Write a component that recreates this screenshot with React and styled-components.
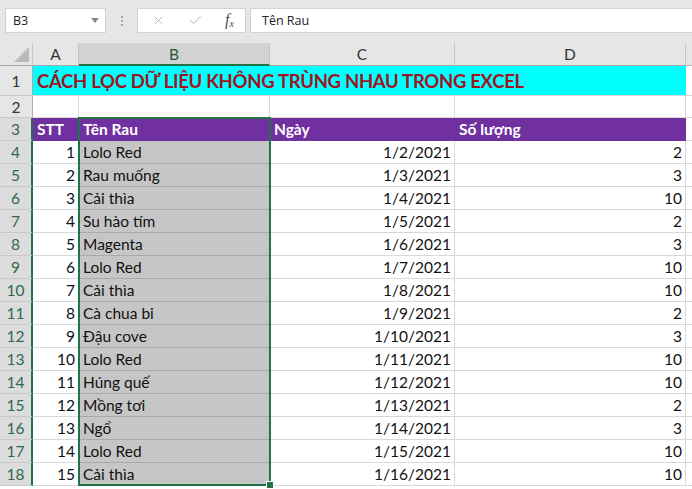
import React from 'react'
import styled, { createGlobalStyle } from 'styled-components'
import { X, Check } from 'lucide-react'

const GlobalStyle = createGlobalStyle`
  body {
    margin: 0;
    background: #ffffff;
    font-family: Lato, 'Liberation Sans', sans-serif;
  }
`

const COLS = '33px 46px 191px 185px 231px 1fr'
const GREEN = '#217346'

const rows = [
  [1, 'Lolo Red', '1/2/2021', 2],
  [2, 'Rau muống', '1/3/2021', 3],
  [3, 'Cải thìa', '1/4/2021', 10],
  [4, 'Su hào tím', '1/5/2021', 2],
  [5, 'Magenta', '1/6/2021', 3],
  [6, 'Lolo Red', '1/7/2021', 10],
  [7, 'Cải thìa', '1/8/2021', 10],
  [8, 'Cà chua bi', '1/9/2021', 2],
  [9, 'Đậu cove', '1/10/2021', 3],
  [10, 'Lolo Red', '1/11/2021', 10],
  [11, 'Húng quế', '1/12/2021', 10],
  [12, 'Mồng tơi', '1/13/2021', 2],
  [13, 'Ngổ', '1/14/2021', 3],
  [14, 'Lolo Red', '1/15/2021', 10],
  [15, 'Cải thìa', '1/16/2021', 10],
]

const App = () => {
  return (
    <>
      <GlobalStyle />
      <Wrapper>
        <FormulaBar>
          <NameBox>
            <span>B3</span>
            <svg width='8' height='5' viewBox='0 0 8 5'>
              <path d='M0 0 L8 0 L4 5 Z' fill='#8a8a8a' />
            </svg>
          </NameBox>
          <Grip>
            <i />
            <i />
            <i />
          </Grip>
          <FxBox>
            <X size={15} strokeWidth={1.4} color='#b4b4b4' />
            <Check size={15} strokeWidth={1.6} color='#b4b4b4' />
            <Fx>
              f<sub>x</sub>
            </Fx>
          </FxBox>
          <FormulaInput>Tên Rau</FormulaInput>
        </FormulaBar>

        <Row $h={23}>
          <Corner>
            <svg width='15' height='15' viewBox='0 0 15 15'>
              <path d='M15 0 L15 15 L0 15 Z' fill='#b9b9b9' />
            </svg>
          </Corner>
          <ColHead>A</ColHead>
          <ColHead $selected>B</ColHead>
          <ColHead>C</ColHead>
          <ColHead>D</ColHead>
          <ColHead $last />
        </Row>

        <Body>
          <Row $h={30}>
            <RowHead>1</RowHead>
            <Title>CÁCH LỌC DỮ LIỆU KHÔNG TRÙNG NHAU TRONG EXCEL</Title>
            <Cell />
          </Row>
          <Row $h={22}>
            <RowHead>2</RowHead>
            <Cell />
            <Cell />
            <Cell />
            <Cell />
            <Cell />
          </Row>
          <Row $h={23}>
            <RowHead $selected>3</RowHead>
            <Cell $fill='#7030a0' $head>STT</Cell>
            <Cell $fill='#7030a0' $head>Tên Rau</Cell>
            <Cell $fill='#7030a0' $head>Ngày</Cell>
            <Cell $fill='#7030a0' $head>Số lượng</Cell>
            <Cell />
          </Row>
          {rows.map((r, i) => (
            <Row $h={23} key={i}>
              <RowHead $selected>{i + 4}</RowHead>
              <Cell $right>{r[0]}</Cell>
              <Cell $fill='#c6c6c6' $line='#a9a9a9'>
                {r[1]}
              </Cell>
              <Cell $right>{r[2]}</Cell>
              <Cell $right>{r[3]}</Cell>
              <Cell />
            </Row>
          ))}
          <Selection>
            <Handle />
          </Selection>
        </Body>
      </Wrapper>
    </>
  )
}

const Wrapper = styled.div`
  width: 692px;
  height: 489px;
  overflow: hidden;
  background: #ffffff;
`

const FormulaBar = styled.div`
  display: flex;
  align-items: flex-start;
  height: 43px;
  box-sizing: border-box;
  padding: 8px 0 0 5px;
  background: #e6e6e6;
  font-family: 'Open Sans', 'Noto Sans', sans-serif;
  font-size: 12.5px;
  color: #222;
`

const NameBox = styled.div`
  width: 101px;
  height: 25px;
  box-sizing: border-box;
  display: flex;
  align-items: center;
  justify-content: space-between;
  padding: 0 6px 0 7px;
  background: #ffffff;
  border: 1px solid #d2d2d2;
`

const Grip = styled.div`
  width: 31px;
  height: 25px;
  display: flex;
  flex-direction: column;
  align-items: center;
  justify-content: center;
  gap: 2px;
  i {
    width: 2px;
    height: 2px;
    background: #a8a8a8;
  }
`

const FxBox = styled.div`
  width: 109px;
  height: 25px;
  box-sizing: border-box;
  display: flex;
  align-items: center;
  justify-content: space-between;
  padding: 0 11px 0 13px;
  background: #ffffff;
  border: 1px solid #d2d2d2;
`

const Fx = styled.span`
  font-family: 'Liberation Serif', serif;
  font-style: italic;
  font-size: 16px;
  color: #505050;
  line-height: 1;
  sub {
    font-size: 10px;
    vertical-align: -2px;
  }
`

const FormulaInput = styled.div`
  flex: 1;
  height: 25px;
  box-sizing: border-box;
  margin-left: 4px;
  padding-left: 11px;
  display: flex;
  align-items: center;
  background: #ffffff;
  border: 1px solid #d2d2d2;
  border-right: none;
`

const Row = styled.div`
  display: grid;
  grid-template-columns: ${COLS};
  height: ${(p) => p.$h}px;
`

const Corner = styled.div`
  background: #e6e6e6;
  border-right: 1px solid #c8c8c8;
  border-bottom: 1px solid #ababab;
  display: flex;
  align-items: flex-end;
  justify-content: flex-end;
  padding: 0 3px 3px 0;
`

const ColHead = styled.div`
  display: flex;
  align-items: center;
  justify-content: center;
  font-size: 15.5px;
  color: ${(p) => (p.$selected ? '#1e5a3e' : '#333')};
  background: ${(p) => (p.$selected ? '#d2d2d2' : '#e6e6e6')};
  border-right: 1px solid ${(p) => (p.$last ? 'transparent' : '#c4c4c4')};
  border-bottom: ${(p) => (p.$selected ? `2px solid ${GREEN}` : '1px solid #ababab')};
  padding-top: ${(p) => (p.$selected ? '1px' : '0')};
`

const Body = styled.div`
  position: relative;
`

const RowHead = styled.div`
  display: flex;
  align-items: center;
  justify-content: center;
  font-size: 15.5px;
  color: ${(p) => (p.$selected ? '#2e6a4c' : '#333')};
  background: ${(p) => (p.$selected ? '#dcdcdc' : '#e6e6e6')};
  border-bottom: 1px solid #c8c8c8;
  border-right: ${(p) => (p.$selected ? `2px solid ${GREEN}` : '1px solid #ababab')};
`

const Cell = styled.div`
  display: flex;
  align-items: center;
  justify-content: ${(p) => (p.$right ? 'flex-end' : 'flex-start')};
  padding: 0 3px 0 4px;
  overflow: hidden;
  white-space: nowrap;
  font-size: 15.5px;
  font-weight: ${(p) => (p.$head ? 700 : 400)};
  color: ${(p) => (p.$head ? '#ffffff' : '#111')};
  background: ${(p) => p.$fill || '#ffffff'};
  border-right: 1px solid ${(p) => (p.$head ? p.$fill : '#d9d9d9')};
  border-bottom: 1px solid ${(p) => p.$line || (p.$head ? p.$fill : '#d9d9d9')};
`

const Title = styled.div`
  grid-column: span 4;
  display: flex;
  align-items: center;
  padding: 1px 0 0 4px;
  background: #00ffff;
  border-bottom: 1px solid #d9d9d9;
  font-size: 18.5px;
  letter-spacing: -0.3px;
  font-weight: 700;
  color: #a0141e;
  white-space: nowrap;
`

const Selection = styled.div`
  position: absolute;
  left: 78px;
  top: 51px;
  width: 193px;
  height: 369px;
  box-sizing: border-box;
  border: 2px solid ${GREEN};
  pointer-events: none;
`

const Handle = styled.div`
  position: absolute;
  right: -5px;
  bottom: -5px;
  width: 6px;
  height: 6px;
  background: ${GREEN};
  border: 1px solid #ffffff;
`

export default App
